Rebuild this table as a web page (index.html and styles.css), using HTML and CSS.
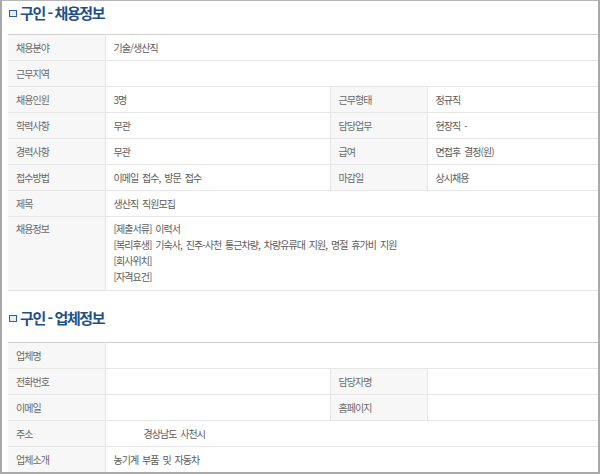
FILE: index.html
```html
<!DOCTYPE html>
<html lang="ko">
<head>
<meta charset="utf-8">
<link rel="stylesheet" href="styles.css">
</head>
<body>
<div class="frame">
  <h2 class="title"><span class="ico"></span>구인 - 채용정보</h2>
  <table class="info">
    <colgroup><col class="c1"><col class="c2"><col class="c3"><col class="c4"></colgroup>
    <tr class="first"><th>채용분야</th><td colspan="3">기술/생산직</td></tr>
    <tr><th>근무지역</th><td colspan="3"></td></tr>
    <tr><th>채용인원</th><td>3명</td><th>근무형태</th><td>정규직</td></tr>
    <tr><th>학력사항</th><td>무관</td><th>담당업무</th><td>현장직 -</td></tr>
    <tr><th>경력사항</th><td>무관</td><th>급여</th><td>면접후 결정(원)</td></tr>
    <tr><th>접수방법</th><td>이메일 접수, 방문 접수</td><th>마감일</th><td>상시채용</td></tr>
    <tr><th>제목</th><td colspan="3">생산직 직원모집</td></tr>
    <tr class="multi"><th>채용정보</th><td colspan="3">[제출서류] 이력서<br>[복리후생] 기숙사, 진주-사천 통근차량, 차량유류대 지원, 명절 휴가비 지원<br>[회사위치]<br>[자격요건]</td></tr>
  </table>
  <h2 class="title second"><span class="ico"></span>구인 - 업체정보</h2>
  <table class="info">
    <colgroup><col class="c1"><col class="c2"><col class="c3"><col class="c4"></colgroup>
    <tr class="first"><th>업체명</th><td colspan="3"></td></tr>
    <tr><th>전화번호</th><td></td><th>담당자명</th><td></td></tr>
    <tr><th>이메일</th><td></td><th>홈페이지</th><td></td></tr>
    <tr><th>주소</th><td colspan="3"><span class="addr">경상남도 사천시</span></td></tr>
    <tr class="last"><th>업체소개</th><td colspan="3">농기계 부품 및 자동차</td></tr>
  </table>
</div>
</body>
</html>
```
FILE: styles.css
```css
html, body {
  margin: 0;
  padding: 0;
  background: #fff;
}
.frame {
  box-sizing: border-box;
  width: 600px;
  height: 474px;
  border-top: 1px solid #b5b5b5;
  border-left: 2px solid #a9a9a9;
  border-right: 2px solid #a9a9a9;
  border-bottom: 2px solid #a9a9a9;
  padding: 0 0 0 6px;
  overflow: hidden;
  font-family: "Noto Sans CJK KR", "Noto Sans", sans-serif;
  color: #666;
}
.title {
  margin: 0 0 10px 0;
  height: 23px;
  display: flex;
  align-items: center;
  gap: 2px;
  padding-left: 1px;
  font-size: 15px;
  font-weight: bold;
  color: #1f4f8a;
  letter-spacing: -1.4px;
}
.title.second {
  margin: 14px 0 13px 0;
  height: 24px;
}
.ico {
  display: inline-block;
  width: 6px;
  height: 5px;
  border: 1.5px solid #2a5ea3;
  background: #e6eef8;
  margin-top: 2px;
  margin-right: 1px;
}
.info {
  width: 590px;
  border-collapse: collapse;
  table-layout: fixed;
  font-size: 10px;
  letter-spacing: -0.95px;
  word-spacing: 2px;
}
.c1 { width: 97px; }
.c2 { width: 225px; }
.c3 { width: 97px; }
.c4 { width: 171px; }
.info tr { height: 26px; }
.info tr.first th, .info tr.first td { border-top: 1px solid #cfcfcf; }
.info th, .info td {
  border-top: 1px solid #e6e6e6;
  border-bottom: 1px solid #e6e6e6;
  padding: 0 8px;
  text-align: left;
  font-weight: normal;
  vertical-align: middle;
  line-height: 16px;
  white-space: nowrap;
}
.info th {
  background: #f7f7f7;
  border-right: 1px solid #e6e6e6;
  color: #6a6a6a;
}
.info td {
  color: #5c5c5c;
  border-right: 1px solid #e6e6e6;
}
.info tr.multi th { vertical-align: top; padding-top: 4px; }
.info tr.multi td { padding-top: 4px; padding-bottom: 5px; }
.info tr.last th, .info tr.last td { border-bottom: 1px solid #cfcfcf; }
.addr { padding-left: 30px; }
```
